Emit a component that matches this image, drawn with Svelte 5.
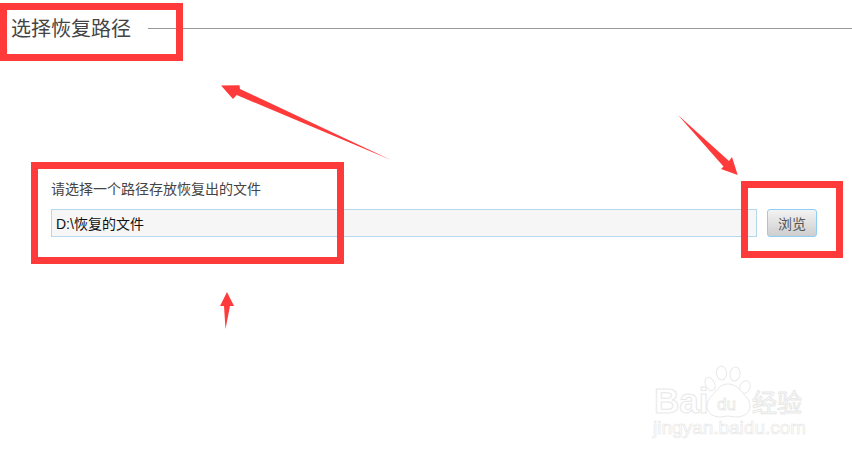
<script>
  let path = 'D:\\恢复的文件'
  const marks = [
    { left: 0, top: 3, width: 183, height: 58 },
    { left: 31, top: 162, width: 313, height: 102 },
    { left: 741, top: 181, width: 102, height: 77 }
  ]
  const arrows = [
    '221,85.5 239.5,85.3 240,89 391,160 236.7,95 233,99',
    '678,115 729,161 732,157 737.7,175 721,169 723.5,166.5',
    '227,292 234,306 230,306 225.5,329 224,306 220,306'
  ]
  const toes = [
    [710, 384, 4.5, 7, -25],
    [721.5, 373, 5, 7, -5],
    [735, 374, 5, 7, 8],
    [745, 387, 5, 6.5, 25]
  ]
</script>

<div class="page">
  <header class="head">
    <h1>选择恢复路径</h1>
    <span class="rule"></span>
  </header>

  <section class="form">
    <p>请选择一个路径存放恢复出的文件</p>
    <div class="row">
      <input type="text" readonly value={path} />
      <button type="button">浏览</button>
    </div>
  </section>

  {#each marks as m}
    <div class="mark" style="left:{m.left}px;top:{m.top}px;width:{m.width}px;height:{m.height}px"></div>
  {/each}

  <svg class="overlay" width="852" height="458" viewBox="0 0 852 458">
    {#each arrows as points}
      <polygon {points} fill="#ff3a3a" />
    {/each}

    <g class="wm">
      {#each toes as [cx, cy, rx, ry, rot]}
        <ellipse {cx} {cy} {rx} {ry} transform="rotate({rot} {cx} {cy})" />
      {/each}
      <path d="M728 384c-6 0-10 4-13 8-3 4-8 7-8 14 0 7 6 11 13 11 3 0 5-1 8-1s5 1 8 1c8 0 14-4 14-11 0-7-5-10-8-14-3-4-8-8-14-8z" />
      <text class="bai" x="654" y="413">Bai</text>
      <text class="du" x="717" y="410">du</text>
      <text class="jy" x="752" y="412">经验</text>
      <text class="url" x="653" y="434">jingyan.baidu.com</text>
    </g>
  </svg>
</div>

<style>
  :global(body) {
    margin: 0;
    background: #fff;
  }

  .page {
    position: relative;
    width: 852px;
    height: 458px;
    overflow: hidden;
    font-family: "Liberation Sans", "Noto Sans CJK SC", sans-serif;
  }

  .head {
    display: flex;
    align-items: center;
    gap: 17px;
    height: 56px;
    padding-left: 11px;
  }

  h1 {
    margin: 0 0 2px;
    font-size: 20px;
    font-weight: 400;
    color: #444;
    white-space: nowrap;
  }

  .rule {
    flex: 1;
    height: 1px;
    background: #999;
  }

  .form {
    padding: 124px 35px 0 51px;
  }

  p {
    margin: 0 0 10px;
    height: 19px;
    line-height: 19px;
    font-size: 14px;
    color: #444;
  }

  .row {
    display: flex;
    gap: 10px;
  }

  input {
    flex: 1;
    min-width: 0;
    height: 28px;
    box-sizing: border-box;
    padding: 0 4px;
    border: 1px solid #b6d8ee;
    background: #f6f6f6;
    font-family: inherit;
    font-size: 14px;
    color: #111;
    outline: none;
  }

  button {
    width: 50px;
    height: 28px;
    box-sizing: border-box;
    padding: 0;
    border: 1px solid #8ecdf6;
    border-radius: 3px;
    background: linear-gradient(#f3f3f3, #cecece);
    font-family: inherit;
    font-size: 14px;
    color: #555;
  }

  .mark {
    position: absolute;
    box-sizing: border-box;
    border: 7px solid #ff3a3a;
  }

  .overlay {
    position: absolute;
    left: 0;
    top: 0;
    pointer-events: none;
  }

  .wm ellipse,
  .wm path,
  .wm text {
    fill: #fff;
    stroke: #e8e8e8;
    stroke-width: 1;
  }

  .bai {
    font-size: 35px;
    font-weight: 700;
  }

  .wm .du {
    font-size: 17px;
    stroke-width: 0.8;
  }

  .jy {
    font-size: 25px;
  }

  .wm .url {
    font-size: 19px;
    stroke-width: 0.7;
  }
</style>
